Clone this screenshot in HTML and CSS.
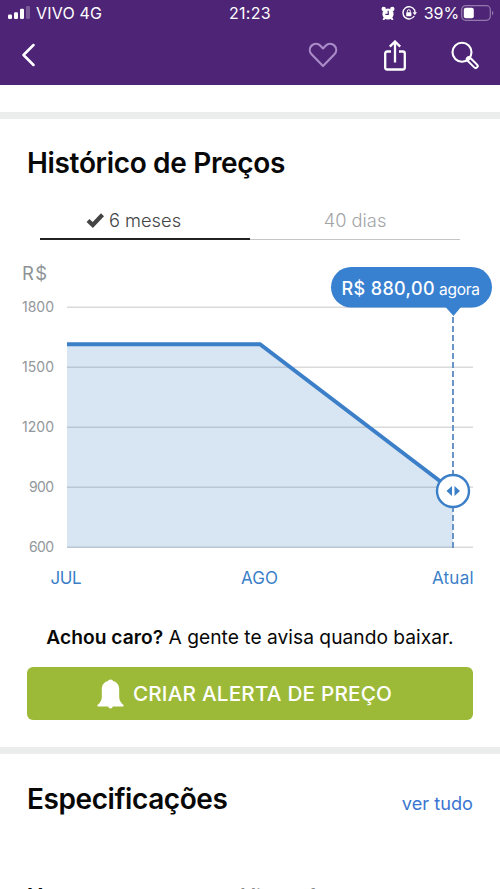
FILE: index.html
```html
<!DOCTYPE html>
<html lang="pt-BR">
<head>
<meta charset="utf-8">
<title>Histórico de Preços</title>
<link rel="stylesheet" href="styles.css">
</head>
<body>
<header class="header">
  <div class="status">
    <div class="status-left">
      <svg class="signal" width="23" height="14" viewBox="0 0 23 14" fill="#fff"><rect x="0" y="8.5" width="4" height="4.500" rx="1.2"/><rect x="6" y="6.3" width="4" height="6.7" rx="1.2"/><rect x="12" y="2.8" width="4" height="10.2" rx="1.2"/><rect x="18" y="0" width="4" height="13" rx="1.2" opacity=".25"/></svg>
      <span class="carrier">VIVO 4G</span>
    </div>
    <span class="clock">21:23</span>
    <div class="status-right">
      <svg width="14" height="15" viewBox="0 0 14 15"><g fill="#fff"><circle cx="7" cy="8" r="5.6"/><circle cx="2.7" cy="2.9" r="2.2"/><circle cx="11.3" cy="2.9" r="2.2"/><path d="M2.5 11.5 1.6 14h1.6l1.5-1.4zM11.5 11.5l.9 2.5h-1.6l-1.5-1.4z"/></g><path d="M7.2 4.7v3.6H4.4" fill="none" stroke="#4e2576" stroke-width="1.2"/></svg>
      <svg class="lock" width="15" height="14" viewBox="0 0 15 14"><path d="M12.5 4A6.1 6.1 0 1 0 12.3 10M12.4 3.5q.6 1.6.6 3.3" fill="none" stroke="#fff" stroke-width="1.4"/><path d="M10.6 6.2H15l-2.2 3z" fill="#fff"/><rect x="4.2" y="6.2" width="5.2" height="4" rx=".6" fill="#fff"/><path d="M5.3 6.5V5.2a1.5 1.5 0 0 1 3 0v1.3" fill="none" stroke="#fff" stroke-width="1"/></svg>
      <span class="percent">39%</span>
      <svg class="battery" width="33" height="16" viewBox="0 0 33 16"><rect x=".7" y=".7" width="28.6" height="14.6" rx="4" fill="none" stroke="#9479ac" stroke-width="1.2"/><rect x="2.8" y="2.8" width="10" height="10.4" rx="2" fill="#fff"/><path d="M31 5.7q1.3.8 1.3 2.3T31 10.3z" fill="#9479ac"/></svg>
    </div>
  </div>
  <nav class="nav">
    <svg width="14" height="24" viewBox="0 0 14 24"><path d="M12.5 2 2.5 12l10 10" fill="none" stroke="#fff" stroke-width="2.5" stroke-linecap="round" stroke-linejoin="round"/></svg>
    <div class="actions">
      <svg width="30" height="26" viewBox="0 0 30 26"><path d="M15 24 3.8 12.5C1.2 9.8 1.2 6 3.6 3.6c2.5-2.5 6.4-2.4 8.8.1L15 6.4l2.6-2.7c2.4-2.5 6.3-2.6 8.8-.1 2.4 2.4 2.4 6.2-.2 8.9z" fill="none" stroke="#a98bc8" stroke-width="2.2" stroke-linejoin="round"/></svg>
      <svg class="share" width="22" height="31" viewBox="0 0 22 31"><path d="M7 11.5H3.2Q1.2 11.5 1.2 13.5v14Q1.2 29.5 3.2 29.5h15.6q2 0 2-2v-14q0-2-2-2H15M11 22.5V1.7M5.8 6.6 11 1.5l5.2 5.1" fill="none" stroke="#fff" stroke-width="2.3"/></svg>
      <svg class="search" width="28" height="29" viewBox="0 0 28 29"><circle cx="11" cy="11.2" r="9.500" fill="none" stroke="#fff" stroke-width="2.1"/><path d="M17.8 18.1 24.7 25" stroke="#fff" stroke-width="6" stroke-linecap="round"/><path d="M19.2 19.6 24.6 25" stroke="#4e2576" stroke-width="2" stroke-linecap="round"/></svg>
    </div>
  </nav>
</header>
<div class="divider divider-top"></div>
<main>
  <section class="history">
    <h2>Histórico de Preços</h2>
    <div class="tabs">
      <div class="tab active"><svg width="19" height="16" viewBox="0 0 19 16"><path d="M2 8.5 6.8 13 16.5 2.8" fill="none" stroke="#444" stroke-width="4.2"/></svg><span>6 meses</span></div>
      <div class="tab"><span>40 dias</span></div>
    </div>
    <svg class="chart" width="500" height="360" viewBox="0 250 500 360">
      <path d="M67 307.2H473M67 367.2H473M67 427.2H473M67 487.2H473M67 547.2H473" stroke="#d9dadb" stroke-width="1.6"/>
      <path d="M67 344H260L453 491V548H67z" fill="#3b7fc0" fill-opacity=".2"/>
      <path d="M67 344.2H260L453 491" fill="none" stroke="#3b7fc8" stroke-width="4"/>
      <path d="M453 317V548" stroke="#5b8ac0" stroke-width="1.8" stroke-dasharray="6 3"/>
      <circle cx="453" cy="491" r="16" fill="#fff" stroke="#3b7fc8" stroke-width="2.4"/>
      <path d="M452 486v10l-5.5-5zM454.5 486v10l5.5-5z" fill="#3b7fc8"/>
      <rect x="331" y="267" width="161" height="40.5" rx="20.2" fill="#3880d0"/>
      <path d="M445.500 307h15.500l-7.500 9z" fill="#3880d0"/>
      <g class="price"><text x="341.500" y="294.500" textLength="93" font-size="18" font-weight="500">R$ 880,00</text><text x="439" y="294.500" textLength="41" font-size="15.500">agora</text></g>
      <text class="currency" x="22" y="280" textLength="25">R$</text>
      <g class="y-axis"><text x="22" y="311.500" textLength="32">1800</text><text x="22" y="371.500" textLength="32">1500</text><text x="22" y="431.500" textLength="32">1200</text><text x="29" y="491.500" textLength="25">900</text><text x="29" y="551.500" textLength="25">600</text></g>
      <g class="x-axis"><text x="50.500" y="584" textLength="31">JUL</text><text x="241" y="584" textLength="37">AGO</text><text x="432" y="584" textLength="41.500">Atual</text></g>
    </svg>
    <p class="prompt"><b>Achou caro?</b> A gente te avisa quando baixar.</p>
    <button class="alert"><svg width="27" height="30" viewBox="0 0 27 30"><path d="M11 2q0-1.500 2.500-1.500T16 2c4 1 6.200 4 6.200 8.500V18c0 3.500 1.800 6 4.300 8v1.500H15.800q-.3 2-2.300 2t-2.300-2H.5V26c2.500-2 4.300-4.500 4.300-8v-7.500C4.800 6 7 3 11 2z" fill="#fff"/></svg><span>CRIAR ALERTA DE PREÇO</span></button>
  </section>
  <div class="divider"></div>
  <section class="specs">
    <div class="specs-head"><h2>Especificações</h2><a>ver tudo</a></div>
    <div class="spec-row"><b>Marca</b><span>Microsoft</span></div>
  </section>
</main>
</body>
</html>
```
FILE: styles.css
```css
* { box-sizing: border-box; }
body { margin: 0; height: 889px; overflow: hidden; background: #fff; color: #080808; font-family: Inter, "Liberation Sans", sans-serif; }
svg { display: block; flex: none; }
.header { height: 85px; background: #4e2576; color: #fff; }
.status { display: grid; grid-template-columns: 1fr auto 1fr; height: 26px; padding: 0 8px; align-items: center; font-size: 16px; line-height: 26px; }
.status-left, .status-right { display: flex; align-items: center; white-space: nowrap; }
.status-left { gap: 5px; }
.status-right { justify-content: flex-end; }
.carrier { letter-spacing: .2px; }
.clock { letter-spacing: .3px; }
.lock { margin: 0 7px 0 7px; }
.percent { letter-spacing: -.1px; }
.battery { margin-left: 2px; margin-right: -2px; }
.nav { display: flex; justify-content: space-between; height: 58px; padding: 0 21px 0 21px; align-items: center; }
.actions { display: flex; align-items: center; }
.share { margin: 0 45px 0 46px; }
.divider { height: 7px; background: #ebeded; }
.divider-top { margin-top: 27px; }
h2 { margin: 0; font-size: 28px; font-weight: 600; line-height: 36px; letter-spacing: -.33px; white-space: nowrap; }
.history { height: 628px; padding-top: 26px; }
.history h2 { padding-left: 27px; }
.specs h2 { letter-spacing: -.42px; }
.tabs { display: flex; width: 420px; height: 40px; margin: 19px auto 0; }
.tab { width: 210px; display: flex; height: 40px; justify-content: center; gap: 4px; border-bottom: 1.500px solid #c3c6c8; color: #a2a5a7; font-size: 18.300px; font-weight: 300; line-height: 41px; white-space: nowrap; }
.tab svg { margin-top: 12px; }
.tab.active { padding-right: 23px; border-bottom: 2px solid #222; color: #444; }
.chart { margin-top: 10px; font-family: Inter, sans-serif; }
.price { fill: #fff; }
.currency { fill: #8e9396; font-size: 18.500px; }
.y-axis { fill: #92979a; font-size: 14px; }
.x-axis { fill: #3b7fc8; font-size: 17px; }
.prompt { margin: 13px 0 0; text-align: center; font-size: 19.200px; line-height: 29px; letter-spacing: .02px; white-space: nowrap; }
.prompt b { font-weight: 600; }
.alert { display: flex; width: 446px; height: 53px; margin: 15px auto 0; padding: 0 11px 0 0; border: 0; border-radius: 6px; align-items: center; justify-content: center; gap: 9px; background: #9cba37; color: #fff; font: 500 20.700px/54px Inter, sans-serif; letter-spacing: .2px; white-space: nowrap; }
.specs-head { display: flex; height: 90px; padding: 0 27px; align-items: center; justify-content: space-between; }
.specs-head a { color: #3b75d2; font-size: 18.200px; margin-top: 7px; }
.spec-row { display: grid; grid-template-columns: 213px 1fr; padding: 39px 27px 0; font-size: 18px; line-height: 26px; }
.spec-row b { font-weight: 500; }
.spec-row span { color: #888; }
```
